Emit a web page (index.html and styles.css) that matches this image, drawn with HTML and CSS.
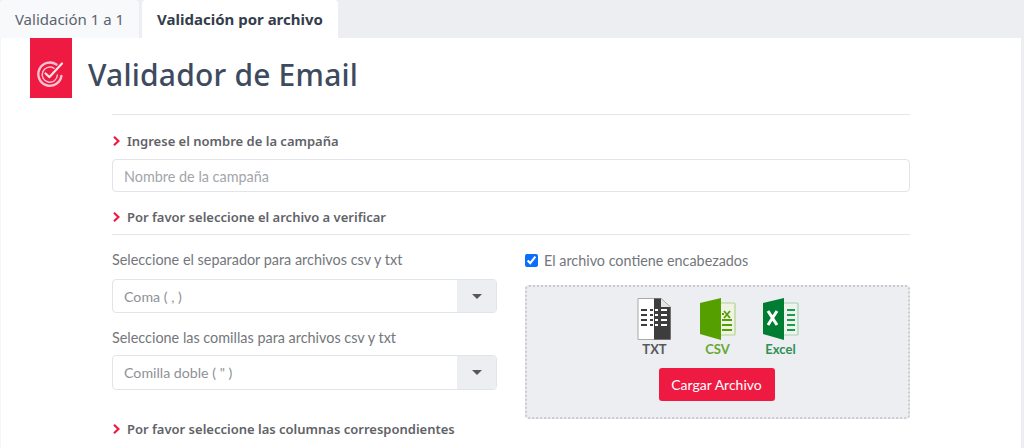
FILE: index.html
```html
<!DOCTYPE html>
<html lang="es">
<head>
<meta charset="utf-8">
<title>Validador de Email</title>
<link rel="stylesheet" href="styles.css">
</head>
<body>
<nav class="tabs">
  <a class="tab">Validación 1 a 1</a>
  <a class="tab tab-active">Validación por archivo</a>
</nav>
<main class="card">
  <header class="head">
    <div class="logo">
      <svg width="30" height="30" viewBox="0 0 30 30" fill="none" stroke="#f9c3cf" stroke-linecap="round">
        <path d="M21.5 5.6A11.6 11.6 0 1 0 26.4 17" stroke-width="2.4"/>
        <path d="M19 9.3A7.6 7.6 0 1 0 22.4 16" stroke-width="1.4"/>
        <path d="M10.5 14.5l4 3.600L27 4.500" stroke="#fbe3e8" stroke-width="2.2" stroke-linejoin="round"/>
      </svg>
    </div>
    <h1 class="title">Validador de Email</h1>
  </header>
  <section class="content">
    <h2 class="step step-first"><svg class="chev" width="7" height="10" viewBox="0 0 7 10"><path d="M1 .8L5.400 5 1 9.200" fill="none" stroke="#ef1a41" stroke-width="2.200"/></svg>Ingrese el nombre de la campaña</h2>
    <div class="field field-name">Nombre de la campaña</div>
    <h2 class="step step-rule"><svg class="chev" width="7" height="10" viewBox="0 0 7 10"><path d="M1 .8L5.400 5 1 9.200" fill="none" stroke="#ef1a41" stroke-width="2.200"/></svg>Por favor seleccione el archivo a verificar</h2>
    <div class="columns">
      <div class="col">
        <label class="label">Seleccione el separador para archivos csv y txt</label>
        <div class="select"><span class="select-value">Coma ( , )</span><span class="select-arrow"><i class="caret"></i></span></div>
        <label class="label label-second">Seleccione las comillas para archivos csv y txt</label>
        <div class="select select-tall"><span class="select-value">Comilla doble ( " )</span><span class="select-arrow"><i class="caret"></i></span></div>
      </div>
      <div class="col">
        <label class="check"><input type="checkbox" checked>El archivo contiene encabezados</label>
        <div class="drop">
          <div class="types">
            <div class="type type-txt">
              <svg width="34" height="42" viewBox="0 0 34 42">
                <path d="M1 .5H24L33.500 9V41.500H1Z" fill="#fff" stroke="#a9a9a9"/>
                <path d="M17 .5H24L33.500 9V41.500H17Z" fill="#3d3d3d"/>
                <path d="M24 .5V9H33.500Z" fill="#e4e4e4"/>
                <path d="M4 12h6M13 12h3M4 17h6M13 17h3M4 22h6M13 22h3M4 27h6M13 27h3" stroke="#3d3d3d" stroke-width="2.200"/>
                <path d="M18 12h3M24 12h6M18 17h3M24 17h6M18 22h3M24 22h6M18 27h3M24 27h6" stroke="#fff" stroke-width="2.200"/>
              </svg>
              <span>TXT</span>
            </div>
            <div class="type type-csv">
              <svg width="36" height="42" viewBox="0 0 36 42">
                <rect x="18" y="5" width="17" height="32" rx="1" fill="#eef3e6" stroke="#b4d48c" stroke-width="1.200"/>
                <path d="M0 5L21 0V42L0 36Z" fill="#559f00"/>
                <path d="M24 13l6 7M30 13l-6 7" stroke="#559f00" stroke-width="1.800"/>
                <path d="M22 16h2M22 22h10M22 27h10M22 32h10" stroke="#559f00" stroke-width="2"/>
              </svg>
              <span>CSV</span>
            </div>
            <div class="type type-xls">
              <svg width="36" height="42" viewBox="0 0 36 42">
                <rect x="18" y="5" width="17" height="32" rx="1" fill="#eef3ee" stroke="#a5d2b4" stroke-width="1.200"/>
                <path d="M0 5L21 0V42L0 36Z" fill="#007d33"/>
                <path d="M5 13l9 14M14 13L5 27" stroke="#fff" stroke-width="3"/>
                <path d="M24 12h8M24 17h8M24 22h8M24 27h8M24 32h8" stroke="#1d9c4c" stroke-width="2.200"/>
              </svg>
              <span>Excel</span>
            </div>
          </div>
          <button class="upload">Cargar Archivo</button>
        </div>
      </div>
    </div>
    <h2 class="step step-last"><svg class="chev" width="7" height="10" viewBox="0 0 7 10"><path d="M1 .8L5.400 5 1 9.200" fill="none" stroke="#ef1a41" stroke-width="2.200"/></svg>Por favor seleccione las columnas correspondientes</h2>
  </section>
</main>
</body>
</html>
```
FILE: styles.css
```css
* { box-sizing: border-box; }
html, body { height: 100%; }
body {
  margin: 0;
  height: 448px;
  overflow: hidden;
  background: #eceef1;
  font-family: "Noto Sans", sans-serif;
  color: #6c757d;
}
.tabs { display: flex; height: 38px; gap: 3px; }
.tab {
  width: 139px;
  height: 38px;
  padding-top: 9px;
  text-align: center;
  font-size: 15px;
  line-height: 20px;
  color: #5b6470;
  background: #f8f9fa;
  border-radius: 4px 4px 0 0;
}
.tab-active {
  width: 196px;
  font-weight: 700;
  color: #343d4c;
  background: #fff;
}
.card {
  width: 1021px;
  height: 410px;
  background: #fff;
  border-left: 1px solid #f4f5f7;
}
.head { display: flex; height: 60px; padding-left: 29px; }
.logo {
  width: 42px;
  height: 60px;
  padding: 12px 3px 0 0;
  background: #ef1a41;
  display: flex;
  align-items: center;
  justify-content: center;
}
.title {
  margin: 0 0 0 16px;
  font-size: 30px;
  line-height: 74px;
  font-weight: 500;
  color: #3e4a5e;
  letter-spacing: .2px;
}
.content { width: 798px; margin-left: 111px; margin-top: 16px; border-top: 1px solid #e5e7ec; }
.step {
  display: flex;
  align-items: center;
  margin: 0;
  font-family: "Noto Sans", sans-serif;
  font-size: 13px;
  line-height: 18px;
  font-weight: 600;
  color: #5f6368;
}
.chev { margin: 0 7px 0 1px; }
.step-first { margin-top: 17px; }
.field {
  height: 33px;
  margin-top: 9px;
  padding: 0 11px;
  line-height: 33px;
  font-size: 14.4px;
  color: #a2a6ab;
  border: 1px solid #e1e4e9;
  border-radius: 4px;
  font-family: "Lato", sans-serif;
}
.step-rule {
  margin-top: 16px;
  height: 27px;
  padding-bottom: 9px;
  border-bottom: 1px solid #e5e7ec;
}
.columns { display: grid; grid-template-columns: 385px 385px; gap: 28px; margin-top: 15px; }
.label { display: block; font-family: "Lato", sans-serif; font-size: 14.4px; line-height: 20px; color: #73777c; margin-bottom: 9px; }
.label-second { margin-top: 15px; margin-bottom: 7px; }
.select {
  display: flex;
  height: 34px;
  border: 1px solid #e1e4e9;
  border-radius: 4px;
  overflow: hidden;
}
.select-tall { height: 35px; }
.select-value { flex: 1; padding: 0 11px; line-height: 33px; font-family: "Lato", sans-serif; font-size: 14.2px; color: #8d9196; }
.select-arrow { width: 39px; background: #eceef1; display: flex; align-items: center; justify-content: center; }
.caret { width: 0; height: 0; border: 5px solid transparent; border-top: 5px solid #55595e; border-bottom: 0; }
.check { display: flex; align-items: center; height: 20px; font-family: "Lato", sans-serif; font-size: 14.35px; color: #73777c; }
.check input { width: 13px; height: 13px; margin: 0 6px 0 0; accent-color: #0d6efd; }
.drop {
  width: 385px;
  height: 134px;
  margin-top: 15px;
  padding-top: 11px;
  background: #eceef1;
  border: 2px dotted #c9cbce;
  border-radius: 4px;
  display: flex;
  flex-direction: column;
  align-items: center;
}
.types { display: flex; gap: 27px; align-items: flex-start; }
.type { width: 36px; display: flex; flex-direction: column; align-items: center; }
.type-txt svg { margin-right: 2px; }
.type span { font-family: "Lato", sans-serif; font-weight: 700; font-size: 13px; line-height: 14px; margin-top: 2px; }
.type-txt span { color: #55595e; }
.type-csv span { color: #66a832; }
.type-xls span { color: #2f9058; }
.upload {
  width: 116px;
  height: 33px;
  margin: 12px 2px 0 0;
  padding: 0;
  background: #ef1a41;
  border: 0;
  border-radius: 3px;
  color: #fff;
  font-family: "Lato", sans-serif;
  font-size: 14px;
}
.step-last { margin-top: 1px; }
```
